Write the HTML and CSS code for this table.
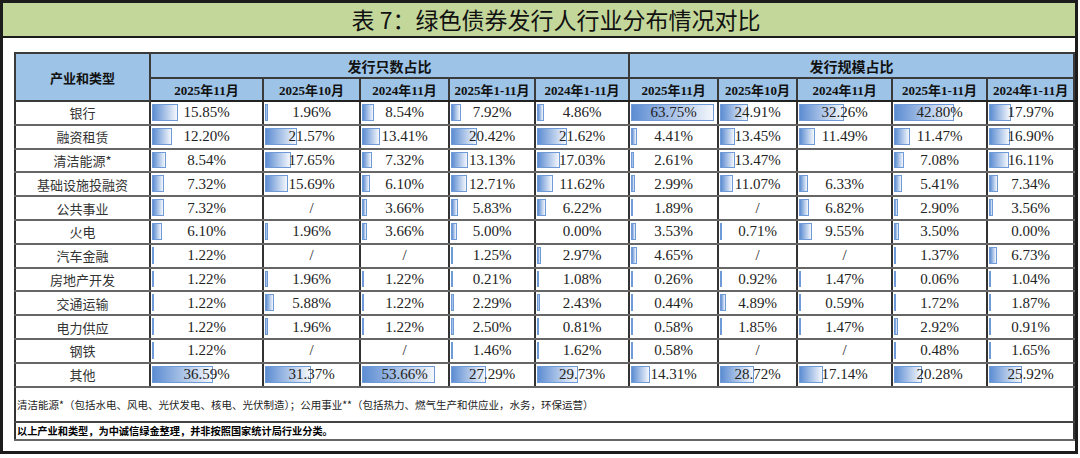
FILE: index.html
```html
<!DOCTYPE html>
<html lang="zh-CN">
<head>
<meta charset="utf-8">
<title>表 7：绿色债券发行人行业分布情况对比</title>
<link rel="stylesheet" href="styles.css">
</head>
<body>
<div class="frame">
  <div class="title">表 7：绿色债券发行人行业分布情况对比</div>
  <div class="content">
    <table class="grid">
      <colgroup>
        <col class="c-label"><col class="w113"><col class="w97"><col class="w89"><col class="w86"><col class="w94"><col class="w89"><col class="w79"><col class="w95"><col class="w95"><col class="w87">
      </colgroup>
      <thead>
        <tr class="h1">
          <th rowspan="2" class="hl">产业和类型</th>
          <th colspan="5" class="grp">发行只数占比</th>
          <th colspan="5" class="grp">发行规模占比</th>
        </tr>
        <tr class="h2">
          <th>2025年11月</th><th>2025年10月</th><th>2024年11月</th><th>2025年1-11月</th><th>2024年1-11月</th>
          <th>2025年11月</th><th>2025年10月</th><th>2024年11月</th><th>2025年1-11月</th><th>2024年1-11月</th>
        </tr>
      </thead>
      <tbody>
        <tr>
          <td class="lab">银行</td>
          <td class="v"><span class="bar" style="width:26px"></span><span class="num">15.85%</span></td>
          <td class="v"><span class="bar" style="width:3px"></span><span class="num">1.96%</span></td>
          <td class="v"><span class="bar" style="width:12px"></span><span class="num">8.54%</span></td>
          <td class="v"><span class="bar" style="width:10px"></span><span class="num">7.92%</span></td>
          <td class="v"><span class="bar" style="width:7px"></span><span class="num">4.86%</span></td>
          <td class="v"><span class="bar" style="width:83px"></span><span class="num">63.75%</span></td>
          <td class="v"><span class="bar" style="width:28px"></span><span class="num">24.91%</span></td>
          <td class="v"><span class="bar" style="width:45px"></span><span class="num">32.26%</span></td>
          <td class="v"><span class="bar" style="width:60px"></span><span class="num">42.80%</span></td>
          <td class="v"><span class="bar" style="width:22px"></span><span class="num">17.97%</span></td>
        </tr>
        <tr>
          <td class="lab">融资租赁</td>
          <td class="v"><span class="bar" style="width:20px"></span><span class="num">12.20%</span></td>
          <td class="v"><span class="bar" style="width:32px"></span><span class="num">21.57%</span></td>
          <td class="v"><span class="bar" style="width:18px"></span><span class="num">13.41%</span></td>
          <td class="v"><span class="bar" style="width:26px"></span><span class="num">20.42%</span></td>
          <td class="v"><span class="bar" style="width:30px"></span><span class="num">21.62%</span></td>
          <td class="v"><span class="bar" style="width:6px"></span><span class="num">4.41%</span></td>
          <td class="v"><span class="bar" style="width:15px"></span><span class="num">13.45%</span></td>
          <td class="v"><span class="bar" style="width:16px"></span><span class="num">11.49%</span></td>
          <td class="v"><span class="bar" style="width:16px"></span><span class="num">11.47%</span></td>
          <td class="v"><span class="bar" style="width:21px"></span><span class="num">16.90%</span></td>
        </tr>
        <tr>
          <td class="lab">清洁能源*</td>
          <td class="v"><span class="bar" style="width:14px"></span><span class="num">8.54%</span></td>
          <td class="v"><span class="bar" style="width:26px"></span><span class="num">17.65%</span></td>
          <td class="v"><span class="bar" style="width:10px"></span><span class="num">7.32%</span></td>
          <td class="v"><span class="bar" style="width:17px"></span><span class="num">13.13%</span></td>
          <td class="v"><span class="bar" style="width:23px"></span><span class="num">17.03%</span></td>
          <td class="v"><span class="bar" style="width:3px"></span><span class="num">2.61%</span></td>
          <td class="v"><span class="bar" style="width:15px"></span><span class="num">13.47%</span></td>
          <td class="v"></td>
          <td class="v"><span class="bar" style="width:10px"></span><span class="num">7.08%</span></td>
          <td class="v"><span class="bar" style="width:20px"></span><span class="num">16.11%</span></td>
        </tr>
        <tr>
          <td class="lab">基础设施投融资</td>
          <td class="v"><span class="bar" style="width:12px"></span><span class="num">7.32%</span></td>
          <td class="v"><span class="bar" style="width:23px"></span><span class="num">15.69%</span></td>
          <td class="v"><span class="bar" style="width:8px"></span><span class="num">6.10%</span></td>
          <td class="v"><span class="bar" style="width:16px"></span><span class="num">12.71%</span></td>
          <td class="v"><span class="bar" style="width:16px"></span><span class="num">11.62%</span></td>
          <td class="v"><span class="bar" style="width:4px"></span><span class="num">2.99%</span></td>
          <td class="v"><span class="bar" style="width:13px"></span><span class="num">11.07%</span></td>
          <td class="v"><span class="bar" style="width:9px"></span><span class="num">6.33%</span></td>
          <td class="v"><span class="bar" style="width:8px"></span><span class="num">5.41%</span></td>
          <td class="v"><span class="bar" style="width:9px"></span><span class="num">7.34%</span></td>
        </tr>
        <tr>
          <td class="lab">公共事业</td>
          <td class="v"><span class="bar" style="width:12px"></span><span class="num">7.32%</span></td>
          <td class="v"><span class="num">/</span></td>
          <td class="v"><span class="bar" style="width:5px"></span><span class="num">3.66%</span></td>
          <td class="v"><span class="bar" style="width:7px"></span><span class="num">5.83%</span></td>
          <td class="v"><span class="bar" style="width:9px"></span><span class="num">6.22%</span></td>
          <td class="v"><span class="bar" style="width:2px"></span><span class="num">1.89%</span></td>
          <td class="v"><span class="num">/</span></td>
          <td class="v"><span class="bar" style="width:10px"></span><span class="num">6.82%</span></td>
          <td class="v"><span class="bar" style="width:4px"></span><span class="num">2.90%</span></td>
          <td class="v"><span class="bar" style="width:4px"></span><span class="num">3.56%</span></td>
        </tr>
        <tr>
          <td class="lab">火电</td>
          <td class="v"><span class="bar" style="width:10px"></span><span class="num">6.10%</span></td>
          <td class="v"><span class="bar" style="width:3px"></span><span class="num">1.96%</span></td>
          <td class="v"><span class="bar" style="width:5px"></span><span class="num">3.66%</span></td>
          <td class="v"><span class="bar" style="width:6px"></span><span class="num">5.00%</span></td>
          <td class="v"><span class="num">0.00%</span></td>
          <td class="v"><span class="bar" style="width:5px"></span><span class="num">3.53%</span></td>
          <td class="v"><span class="bar" style="width:1px"></span><span class="num">0.71%</span></td>
          <td class="v"><span class="bar" style="width:13px"></span><span class="num">9.55%</span></td>
          <td class="v"><span class="bar" style="width:5px"></span><span class="num">3.50%</span></td>
          <td class="v"><span class="num">0.00%</span></td>
        </tr>
        <tr>
          <td class="lab">汽车金融</td>
          <td class="v"><span class="bar" style="width:2px"></span><span class="num">1.22%</span></td>
          <td class="v"><span class="num">/</span></td>
          <td class="v"><span class="num">/</span></td>
          <td class="v"><span class="bar" style="width:2px"></span><span class="num">1.25%</span></td>
          <td class="v"><span class="bar" style="width:4px"></span><span class="num">2.97%</span></td>
          <td class="v"><span class="bar" style="width:6px"></span><span class="num">4.65%</span></td>
          <td class="v"><span class="num">/</span></td>
          <td class="v"><span class="num">/</span></td>
          <td class="v"><span class="bar" style="width:2px"></span><span class="num">1.37%</span></td>
          <td class="v"><span class="bar" style="width:8px"></span><span class="num">6.73%</span></td>
        </tr>
        <tr>
          <td class="lab">房地产开发</td>
          <td class="v"><span class="bar" style="width:2px"></span><span class="num">1.22%</span></td>
          <td class="v"><span class="bar" style="width:3px"></span><span class="num">1.96%</span></td>
          <td class="v"><span class="bar" style="width:2px"></span><span class="num">1.22%</span></td>
          <td class="v"><span class="bar" style="width:1px"></span><span class="num">0.21%</span></td>
          <td class="v"><span class="bar" style="width:2px"></span><span class="num">1.08%</span></td>
          <td class="v"><span class="bar" style="width:1px"></span><span class="num">0.26%</span></td>
          <td class="v"><span class="bar" style="width:1px"></span><span class="num">0.92%</span></td>
          <td class="v"><span class="bar" style="width:2px"></span><span class="num">1.47%</span></td>
          <td class="v"><span class="bar" style="width:1px"></span><span class="num">0.06%</span></td>
          <td class="v"><span class="bar" style="width:1px"></span><span class="num">1.04%</span></td>
        </tr>
        <tr>
          <td class="lab">交通运输</td>
          <td class="v"><span class="bar" style="width:2px"></span><span class="num">1.22%</span></td>
          <td class="v"><span class="bar" style="width:9px"></span><span class="num">5.88%</span></td>
          <td class="v"><span class="bar" style="width:2px"></span><span class="num">1.22%</span></td>
          <td class="v"><span class="bar" style="width:3px"></span><span class="num">2.29%</span></td>
          <td class="v"><span class="bar" style="width:3px"></span><span class="num">2.43%</span></td>
          <td class="v"><span class="bar" style="width:1px"></span><span class="num">0.44%</span></td>
          <td class="v"><span class="bar" style="width:6px"></span><span class="num">4.89%</span></td>
          <td class="v"><span class="bar" style="width:1px"></span><span class="num">0.59%</span></td>
          <td class="v"><span class="bar" style="width:2px"></span><span class="num">1.72%</span></td>
          <td class="v"><span class="bar" style="width:2px"></span><span class="num">1.87%</span></td>
        </tr>
        <tr>
          <td class="lab">电力供应</td>
          <td class="v"><span class="bar" style="width:2px"></span><span class="num">1.22%</span></td>
          <td class="v"><span class="bar" style="width:3px"></span><span class="num">1.96%</span></td>
          <td class="v"><span class="bar" style="width:2px"></span><span class="num">1.22%</span></td>
          <td class="v"><span class="bar" style="width:3px"></span><span class="num">2.50%</span></td>
          <td class="v"><span class="bar" style="width:1px"></span><span class="num">0.81%</span></td>
          <td class="v"><span class="bar" style="width:1px"></span><span class="num">0.58%</span></td>
          <td class="v"><span class="bar" style="width:2px"></span><span class="num">1.85%</span></td>
          <td class="v"><span class="bar" style="width:2px"></span><span class="num">1.47%</span></td>
          <td class="v"><span class="bar" style="width:4px"></span><span class="num">2.92%</span></td>
          <td class="v"><span class="bar" style="width:1px"></span><span class="num">0.91%</span></td>
        </tr>
        <tr>
          <td class="lab">钢铁</td>
          <td class="v"><span class="bar" style="width:2px"></span><span class="num">1.22%</span></td>
          <td class="v"><span class="num">/</span></td>
          <td class="v"><span class="num">/</span></td>
          <td class="v"><span class="bar" style="width:2px"></span><span class="num">1.46%</span></td>
          <td class="v"><span class="bar" style="width:2px"></span><span class="num">1.62%</span></td>
          <td class="v"><span class="bar" style="width:1px"></span><span class="num">0.58%</span></td>
          <td class="v"><span class="num">/</span></td>
          <td class="v"><span class="num">/</span></td>
          <td class="v"><span class="bar" style="width:1px"></span><span class="num">0.48%</span></td>
          <td class="v"><span class="bar" style="width:2px"></span><span class="num">1.65%</span></td>
        </tr>
        <tr>
          <td class="lab">其他</td>
          <td class="v"><span class="bar" style="width:61px"></span><span class="num">36.59%</span></td>
          <td class="v"><span class="bar" style="width:46px"></span><span class="num">31.37%</span></td>
          <td class="v"><span class="bar" style="width:73px"></span><span class="num">53.66%</span></td>
          <td class="v"><span class="bar" style="width:35px"></span><span class="num">27.29%</span></td>
          <td class="v"><span class="bar" style="width:41px"></span><span class="num">29.73%</span></td>
          <td class="v"><span class="bar" style="width:19px"></span><span class="num">14.31%</span></td>
          <td class="v"><span class="bar" style="width:34px"></span><span class="num">28.72%</span></td>
          <td class="v"><span class="bar" style="width:24px"></span><span class="num">17.14%</span></td>
          <td class="v"><span class="bar" style="width:28px"></span><span class="num">20.28%</span></td>
          <td class="v"><span class="bar" style="width:33px"></span><span class="num">25.92%</span></td>
        </tr>
        <tr class="note">
          <td colspan="11">清洁能源*（包括水电、风电、光伏发电、核电、光伏制造）；公用事业**（包括热力、燃气生产和供应业，水务，环保运营）</td>
        </tr>
        <tr class="src">
          <td colspan="11">以上产业和类型，为中诚信绿金整理，并非按照国家统计局行业分类。</td>
        </tr>
      </tbody>
    </table>
  </div>
</div>
</body>
</html>
```
FILE: styles.css
```css
* { box-sizing: border-box; }
html, body { margin: 0; padding: 0; background: #ffffff; }
body { width: 1080px; height: 458px; overflow: hidden; }

.frame {
  width: 1078px;
  height: 454px;
  border: 3px solid #1c1c1c;
  background: #ffffff;
  display: flex;
  flex-direction: column;
}

.title {
  height: 35px;
  background: #c4d79b;
  border-bottom: 2px solid #1c1c1c;
  font-family: "Noto Sans CJK SC", "Noto Sans", sans-serif;
  font-size: 23px;
  line-height: 32px;
  color: #111;
  text-align: center;
  padding-left: 34px;
  white-space: nowrap;
}

.content {
  padding: 14px 0 0 11px;
}

.grid {
  width: 1059px;
  table-layout: fixed;
  border-collapse: collapse;
  border: 2px solid #333;
}

.c-label { width: 135px; }
.w113 { width: 113px; }
.w97 { width: 97px; }
.w89 { width: 89px; }
.w86 { width: 86px; }
.w94 { width: 94px; }
.w79 { width: 79px; }
.w95 { width: 95px; }
.w87 { width: 87px; }

.grid th {
  background: #9dc3e6;
  color: #111;
  font-family: "Liberation Serif", "Noto Sans CJK SC", serif;
  font-weight: bold;
  font-size: 13px;
  border: 2px solid #3a3a3a;
  padding: 0;
  text-align: center;
  white-space: nowrap;
}
.grid th.hl {
  font-family: "Noto Sans CJK SC", sans-serif;
  font-size: 13px;
}
.grid th.grp {
  font-family: "Noto Sans CJK SC", sans-serif;
  font-size: 14px;
}
.h1 { height: 25px; }
.h2 { height: 23px; }
.h2 th { border-bottom: 2px solid #222; }

.grid td {
  padding: 0;
  border-top: 2px solid #666;
  border-bottom: 2px solid #666;
  border-left: 2px solid #333;
  border-right: 2px solid #333;
  height: 23.8px;
  white-space: nowrap;
}

.grid td.lab {
  font-family: "Noto Sans CJK SC", sans-serif;
  font-size: 13px;
  color: #333;
  text-align: center;
}

.grid td.v {
  position: relative;
  text-align: center;
  font-family: "Liberation Serif", serif;
  font-size: 15px;
  color: #222;
}

.bar {
  position: absolute;
  left: 1px;
  top: 2px;
  bottom: 3px;
  border: 1px solid #6e9bd8;
  background: linear-gradient(to right, #5d8dd2, #f4f7fc);
}

.num {
  position: relative;
}

.grid tr.note td {
  height: 35px;
  font-family: "Noto Sans CJK SC", sans-serif;
  font-size: 10.5px;
  color: #222;
  text-align: left;
  padding-left: 1px;
  border-top: 2px solid #333;
  border-bottom: 2px solid #444;
}

.grid tr.src td {
  height: 18px;
  font-family: "Noto Sans CJK SC", sans-serif;
  font-size: 10.2px;
  font-weight: bold;
  color: #000;
  text-align: left;
  padding-left: 1px;
}
```
